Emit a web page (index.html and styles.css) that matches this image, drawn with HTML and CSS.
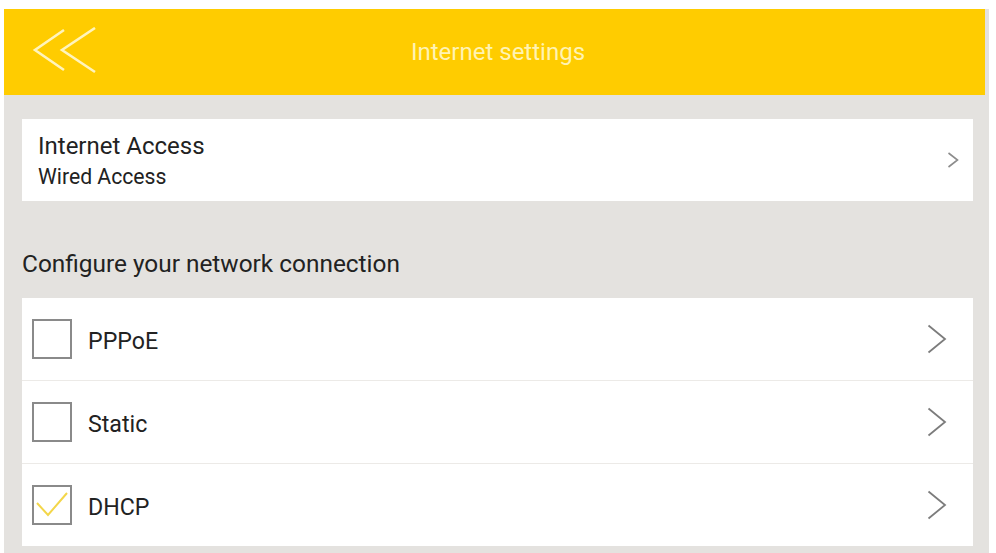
FILE: index.html
```html
<!DOCTYPE html>
<html>
<head>
<meta charset="utf-8">
<link rel="stylesheet" href="styles.css">
</head>
<body>
<div class="app">
  <header class="topbar">
    <svg class="back" width="70" height="50" viewBox="0 0 70 50">
      <polyline points="32,3 3,23 32,43" />
      <polyline points="63,1 30,23 63,45" />
    </svg>
    <h1 class="title">Internet settings</h1>
  </header>
  <main class="content">
    <section class="card access">
      <div class="access-text">
        <div class="access-title">Internet Access</div>
        <div class="access-sub">Wired Access</div>
      </div>
      <svg class="chev-small" width="12" height="16" viewBox="0 0 12 16"><polyline points="1.5,1 10.5,8 1.5,15"/></svg>
    </section>
    <div class="section-label">Configure your network connection</div>
    <section class="card list">
      <div class="row">
        <span class="box"></span>
        <span class="label">PPPoE</span>
        <svg class="chev" width="20" height="30" viewBox="0 0 20 30"><polyline points="1.5,1.5 18,15 1.5,28.5"/></svg>
      </div>
      <div class="row">
        <span class="box"></span>
        <span class="label">Static</span>
        <svg class="chev" width="20" height="30" viewBox="0 0 20 30"><polyline points="1.5,1.5 18,15 1.5,28.5"/></svg>
      </div>
      <div class="row">
        <span class="box checked">
          <svg width="38" height="38" viewBox="0 0 38 38"><polyline points="4,17 15,29 34,7"/></svg>
        </span>
        <span class="label">DHCP</span>
        <svg class="chev" width="20" height="30" viewBox="0 0 20 30"><polyline points="1.5,1.5 18,15 1.5,28.5"/></svg>
      </div>
    </section>
  </main>
</div>
</body>
</html>
```
FILE: styles.css
```css
html, body {
  margin: 0;
  padding: 0;
  background: #ffffff;
}
body {
  font-family: Roboto, "Liberation Sans", Arial, sans-serif;
  color: #222222;
}
.app {
  margin: 9px 7px 0 4px;
  height: 544px;
  display: flex;
  flex-direction: column;
  background: #e4e2df;
}
.topbar {
  height: 86px;
  background: #ffcc00;
  display: flex;
  align-items: center;
  position: relative;
  margin-right: 4px;
}
.back {
  position: absolute;
  left: 28px;
  top: 18px;
  fill: none;
  stroke: #fff4bd;
  stroke-width: 2.6;
}
.title {
  flex: 1;
  margin: 0;
  text-align: center;
  font-weight: 400;
  font-size: 24px;
  color: #fff3b3;
  padding-left: 7px;
  padding-top: 0;
}
.content {
  flex: 1;
  display: flex;
  flex-direction: column;
  padding: 24px 16px 0 18px;
}
.card {
  background: #ffffff;
}
.access {
  height: 82px;
  display: flex;
  align-items: center;
  padding: 0 14px 0 16px;
}
.access-text {
  flex: 1;
  display: flex;
  flex-direction: column;
}
.access-title {
  font-size: 24px;
  line-height: 28px;
  margin-top: 1px;
}
.access-sub {
  font-size: 21.2px;
  line-height: 24px;
  margin-top: 5px;
}
.chev-small {
  fill: none;
  stroke: #8c8c8c;
  stroke-width: 1.6;
}
.section-label {
  height: 97px;
  font-size: 24.4px;
  line-height: 28px;
  padding-top: 49px;
  box-sizing: border-box;
}
.list {
  display: flex;
  flex-direction: column;
}
.row {
  height: 82px;
  display: flex;
  align-items: center;
  padding: 0 26px 0 10px;
  border-bottom: 1px solid #eceae7;
}
.row:last-child {
  border-bottom: none;
}
.box {
  width: 36px;
  height: 36px;
  border: 2px solid #8a8a8a;
  display: inline-flex;
}
.box svg {
  margin: -1px;
  fill: none;
  stroke: #f3d64a;
  stroke-width: 2;
}
.label {
  flex: 1;
  margin-left: 16px;
  font-size: 23.2px;
  padding-top: 3px;
}
.chev {
  fill: none;
  stroke: #7c7c7c;
  stroke-width: 1.8;
}
```
